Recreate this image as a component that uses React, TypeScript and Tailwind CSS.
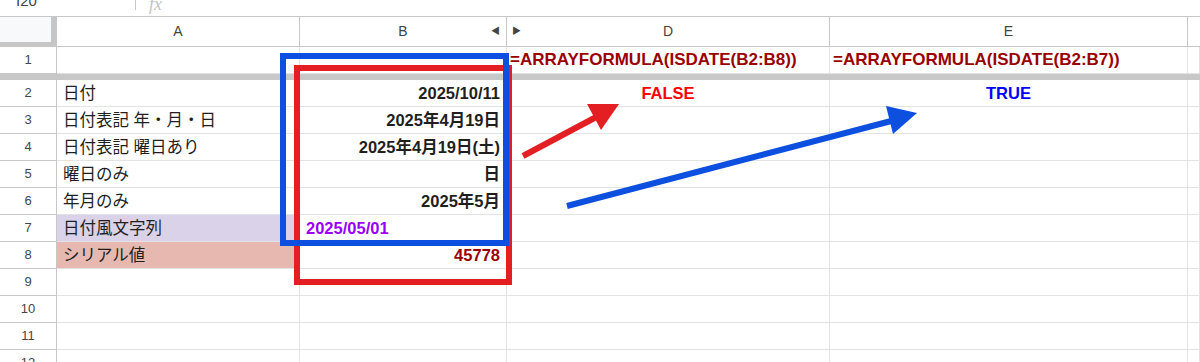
import React from 'react';

const font = { fontFamily: '"Liberation Sans", "Noto Sans CJK JP", sans-serif' };

type RowData = {
    n: number;
    a?: string;
    aBg?: string;
    b?: React.ReactNode;
    d?: React.ReactNode;
    e?: React.ReactNode;
};

const rows: RowData[] = [
    { n: 2, a: '日付', b: <span className="font-bold">2025/10/11</span>, d: <span className="font-bold text-[#ff0000]">FALSE</span>, e: <span className="font-bold text-[#0000ff]">TRUE</span> },
    { n: 3, a: '日付表記 年・月・日', b: <span className="font-bold">2025年4月19日</span> },
    { n: 4, a: '日付表記 曜日あり', b: <span className="font-bold">2025年4月19日(土)</span> },
    { n: 5, a: '曜日のみ', b: <span className="font-bold">日</span> },
    { n: 6, a: '年月のみ', b: <span className="font-bold">2025年5月</span> },
    { n: 7, a: '日付風文字列', aBg: 'bg-[#d9d2e9]' },
    { n: 8, a: 'シリアル値', aBg: 'bg-[#e6b8af]', b: <span className="font-bold text-[#990000]">45778</span> },
    { n: 9 },
    { n: 10 },
    { n: 11 },
    { n: 12 },
];

const cell = 'h-[27px] border-b border-r border-[#e2e3e3] flex items-center overflow-visible whitespace-nowrap';
const rowHead = 'h-[27px] border-b border-r border-[#c7c7c7] flex items-center justify-center text-[13px] text-[#444746]';

const Overlay = () => (
    <svg className="absolute inset-0 pointer-events-none" width={1200} height={362} viewBox="0 0 1200 362">
        {/* red box */}
        <rect x={297} y={68} width={212} height={214} fill="none" stroke="#e31f24" strokeWidth={6} />
        {/* blue box */}
        <rect x={283} y={56} width={223} height={187} fill="none" stroke="#0d50e0" strokeWidth={6} />
        {/* red arrow */}
        <line x1={523} y1={156} x2={600} y2={115} stroke="#e31f24" strokeWidth={6} />
        <polygon points="619,104 587,104 601,130" fill="#e31f24" />
        {/* blue arrow */}
        <line x1={567} y1={206} x2={895} y2={120} stroke="#0d50e0" strokeWidth={6} />
        <polygon points="917,113 886,106 893,134" fill="#0d50e0" />
    </svg>
);

export default function App() {
    return (
        <div className="relative w-[1200px] h-[362px] overflow-hidden bg-white text-[#1f1f1f]" style={font}>
            {/* formula bar (cut off) */}
            <div className="h-[17px] flex items-start border-b border-[#c7c7c7] overflow-hidden">
                <div className="w-[135px] pl-[16px] -mt-[10px] text-[15px] text-[#444]">I20</div>
                <div className="w-px h-[10px] bg-[#c7c7c7]" />
                <div className="ml-[13px] -mt-[9px] text-[18px] italic text-[#c4c4c4]" style={{ fontFamily: '"Liberation Serif", serif' }}>fx</div>
            </div>

            <div className="grid grid-cols-[57px_243px_207px_323px_358px_1fr]">
                {/* column headers */}
                <div className="h-[30px] bg-[#f8f9fa] border-r-[6px] border-b-[5px] border-[#c6c6c6]" />
                <div className="h-[30px] border-r border-b border-[#c7c7c7] flex items-center justify-center text-[14px] text-[#444]">A</div>
                <div className="h-[30px] border-r border-b border-[#c7c7c7] flex items-center justify-center text-[14px] text-[#444] relative">
                    B
                    <span className="absolute right-[6px] text-[9px] text-[#444]">◀</span>
                </div>
                <div className="h-[30px] border-r border-b border-[#c7c7c7] flex items-center justify-center text-[14px] text-[#444] relative">
                    <span className="absolute left-[5px] text-[9px] text-[#444]">▶</span>
                    D
                </div>
                <div className="h-[30px] border-r border-b border-[#c7c7c7] flex items-center justify-center text-[14px] text-[#444]">E</div>
                <div className="h-[30px] border-b border-[#c7c7c7]" />

                {/* row 1 */}
                <div className={rowHead}>1</div>
                <div className={cell} />
                <div className={cell} />
                <div className={`${cell} pl-[3px] text-[17px] font-bold text-[#990000]`}>=ARRAYFORMULA(ISDATE(B2:B8))</div>
                <div className={`${cell} pl-[3px] text-[17px] font-bold text-[#990000]`}>=ARRAYFORMULA(ISDATE(B2:B7))</div>
                <div className={cell} />

                {/* frozen divider */}
                <div className="col-span-6 h-[6px] bg-[#c8c8c8]" />

                {rows.map((r) => (
                    <React.Fragment key={r.n}>
                        <div className={rowHead}>{r.n}</div>
                        <div className={`${cell} pl-[6px] text-[16.5px] ${r.aBg ?? ''}`}>{r.a}</div>
                        {r.n === 7 ? (
                            <div className={`${cell} pl-[6px] text-[16.5px] font-bold text-[#9900ff]`}>2025/05/01</div>
                        ) : (
                            <div className={`${cell} justify-end pr-[6px] text-[16.5px]`}>{r.b}</div>
                        )}
                        <div className={`${cell} justify-center text-[16.5px]`}>{r.d}</div>
                        <div className={`${cell} justify-center text-[16.5px]`}>{r.e}</div>
                        <div className={cell} />
                    </React.Fragment>
                ))}
            </div>

            <Overlay />
        </div>
    );
}
